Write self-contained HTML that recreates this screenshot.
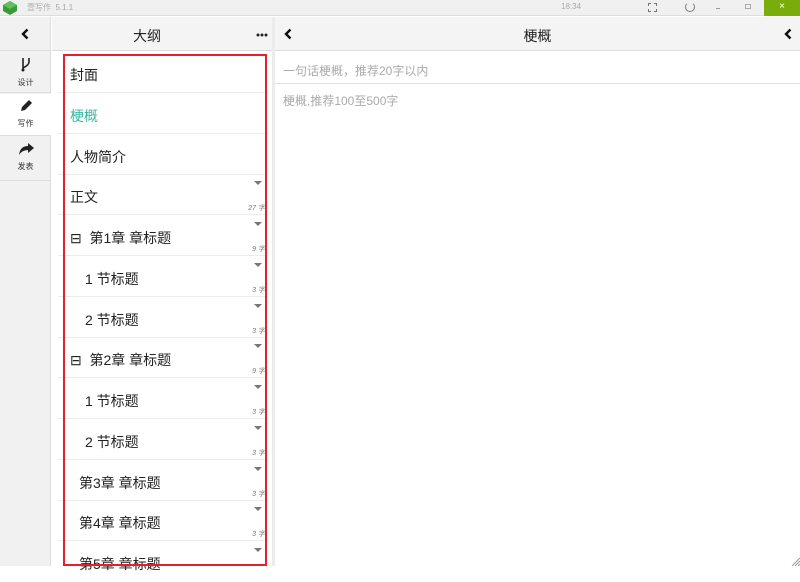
<!DOCTYPE html>
<html><head><meta charset="utf-8"><style>
*{margin:0;padding:0;box-sizing:border-box}
body{width:800px;height:566px;overflow:hidden;background:#fff;font-family:"Liberation Sans","Noto Sans CJK SC",sans-serif;position:relative;color:#222}
.a{position:absolute}
.row{position:absolute;left:58px;width:207px;height:41px}
.row .t{position:absolute;font-size:14px;line-height:16px}
.row .ln{position:absolute;left:0;right:0;bottom:0;height:1px;background:#ececec}
.row .ar{position:absolute;right:3px;top:7px;width:0;height:0;border-left:4px solid transparent;border-right:4px solid transparent;border-top:4px solid #777}
.row .c{position:absolute;right:0;bottom:2px;font-size:7px;font-style:italic;color:#777}
</style></head><body>
<div class="a" style="left:0;top:0;width:800px;height:16px;background:#f0f0f0;border-bottom:1px solid #ddd"></div>
<svg class="a" style="left:3px;top:1px" width="14" height="14" viewBox="0 0 14 14"><polygon points="7,0 14,4 14,10 7,14 0,10 0,4" fill="#3a9a3a"/><polygon points="7,0 14,4 7,8 0,4" fill="#5cc05c"/></svg>
<div class="a" style="left:27px;top:2px;font-size:8px;color:#aaa">壹写作 &nbsp;5.1.1</div>
<div class="a" style="left:561px;top:2px;font-size:8px;color:#aaa">18:34</div>
<div class="a" style="left:648px;top:3px;width:9px;height:9px;border:1px dashed #777"></div>
<div class="a" style="left:685px;top:2px;width:10px;height:10px;border:1.5px solid #777;border-radius:50%;border-top-color:transparent"></div>
<div class="a" style="left:716px;top:8px;width:4px;height:1px;background:#999"></div>
<div class="a" style="left:745px;top:4px;width:6px;height:5px;border:1px solid #aaa"></div>
<div class="a" style="left:764px;top:0;width:36px;height:16px;background:#7aad0b;color:#fff;font-size:10px;text-align:center;line-height:14px">×</div>
<div class="a" style="left:0;top:17px;width:51px;height:549px;background:#f1f1f1;border-right:1px solid #ddd"></div>
<div class="a" style="left:0;top:17px;width:51px;height:34px;border-bottom:1px solid #ddd"></div>
<svg class="a" style="left:21px;top:28px" width="8" height="12" viewBox="0 0 8 12"><path d="M6.5 1.5L2 6l4.5 4.5" stroke="#111" stroke-width="2.4" fill="none"/></svg>
<div class="a" style="left:0;top:52px;width:51px;height:41px;border-bottom:1px solid #ddd;text-align:center">
<svg width="12" height="16" style="margin-top:4px" viewBox="0 0 12 16"><path d="M3 2v12M9 2v4q0 3-6 6" stroke="#222" stroke-width="1.6" fill="none"/><circle cx="3" cy="14" r="1.5" fill="#222"/></svg>
<div style="font-size:8px;color:#333;margin-top:0">设计</div></div>
<div class="a" style="left:0;top:94px;width:51px;height:42px;background:#fff;border-bottom:1px solid #ddd;text-align:center">
<svg width="14" height="14" style="margin-top:5px" viewBox="0 0 14 14"><path d="M2 12l1-4 7-7 3 3-7 7z" fill="#222"/></svg>
<div style="font-size:8px;color:#333">写作</div></div>
<div class="a" style="left:0;top:137px;width:51px;height:44px;border-bottom:1px solid #ddd;text-align:center">
<svg width="16" height="14" style="margin-top:5px" viewBox="0 0 16 14"><path d="M10 1l6 5-6 5V8Q4 8 1 13Q2 4 10 4z" fill="#222"/></svg>
<div style="font-size:8px;color:#333">发表</div></div>
<div class="a" style="left:52px;top:17px;width:221px;height:34px;background:#f4f4f4;border-bottom:1px solid #ddd"></div>
<div class="a" style="left:52px;top:26px;width:190px;text-align:center;font-size:14px">大纲</div>
<svg class="a" style="left:256px;top:33px" width="12" height="4"><circle cx="2" cy="2" r="1.5" fill="#222"/><circle cx="6" cy="2" r="1.5" fill="#222"/><circle cx="10" cy="2" r="1.5" fill="#222"/></svg>
<div class="a" style="left:272px;top:17px;width:3px;height:549px;background:#ececec"></div>
<div class="row" style="top:52px"><div class="t" style="left:12px;top:15px">封面</div><div class="ln"></div></div>
<div class="row" style="top:93px"><div class="t" style="left:12px;top:15px;color:#3bb5a0">梗概</div><div class="ln"></div></div>
<div class="row" style="top:134px"><div class="t" style="left:12px;top:15px">人物简介</div><div class="ln"></div></div>
<div class="row" style="top:174px"><div class="ar"></div><div class="t" style="left:12px;top:15px">正文</div><div class="c">27 字</div><div class="ln"></div></div>
<div class="row" style="top:215px"><div class="ar"></div><div class="t" style="left:12px;top:15px">⊟&nbsp; 第1章 章标题</div><div class="c">9 字</div><div class="ln"></div></div>
<div class="row" style="top:256px"><div class="ar"></div><div class="t" style="left:27px;top:15px">1 节标题</div><div class="c">3 字</div><div class="ln"></div></div>
<div class="row" style="top:297px"><div class="ar"></div><div class="t" style="left:27px;top:15px">2 节标题</div><div class="c">3 字</div><div class="ln"></div></div>
<div class="row" style="top:337px"><div class="ar"></div><div class="t" style="left:12px;top:15px">⊟&nbsp; 第2章 章标题</div><div class="c">9 字</div><div class="ln"></div></div>
<div class="row" style="top:378px"><div class="ar"></div><div class="t" style="left:27px;top:15px">1 节标题</div><div class="c">3 字</div><div class="ln"></div></div>
<div class="row" style="top:419px"><div class="ar"></div><div class="t" style="left:27px;top:15px">2 节标题</div><div class="c">3 字</div><div class="ln"></div></div>
<div class="row" style="top:460px"><div class="ar"></div><div class="t" style="left:21px;top:15px">第3章 章标题</div><div class="c">3 字</div><div class="ln"></div></div>
<div class="row" style="top:500px"><div class="ar"></div><div class="t" style="left:21px;top:15px">第4章 章标题</div><div class="c">3 字</div><div class="ln"></div></div>
<div class="row" style="top:541px"><div class="ar"></div><div class="t" style="left:21px;top:15px">第5章 章标题</div></div>
<div class="a" style="left:63px;top:54px;width:204px;height:512px;border:2px solid #e3202c"></div>
<div class="a" style="left:275px;top:17px;width:525px;height:34px;background:#f4f4f4;border-bottom:1px solid #ddd"></div>
<svg class="a" style="left:284px;top:28px" width="8" height="12" viewBox="0 0 8 12"><path d="M6.5 1.5L2 6l4.5 4.5" stroke="#111" stroke-width="2.4" fill="none"/></svg>
<svg class="a" style="left:784px;top:28px" width="8" height="12" viewBox="0 0 8 12"><path d="M6.5 1.5L2 6l4.5 4.5" stroke="#111" stroke-width="2.4" fill="none"/></svg>
<div class="a" style="left:275px;top:26px;width:525px;text-align:center;font-size:14px">梗概</div>
<div class="a" style="left:283px;top:62px;font-size:12px;color:#aaa">一句话梗概，推荐20字以内</div>
<div class="a" style="left:275px;top:83px;width:525px;height:1px;background:#e2e2e2"></div>
<div class="a" style="left:283px;top:92px;font-size:12px;color:#aaa">梗概,推荐100至500字</div>
<svg class="a" style="left:790px;top:556px" width="10" height="10"><path d="M2 10L10 2M5 10L10 5M8 10L10 8" stroke="#999"/></svg>
</body></html>
